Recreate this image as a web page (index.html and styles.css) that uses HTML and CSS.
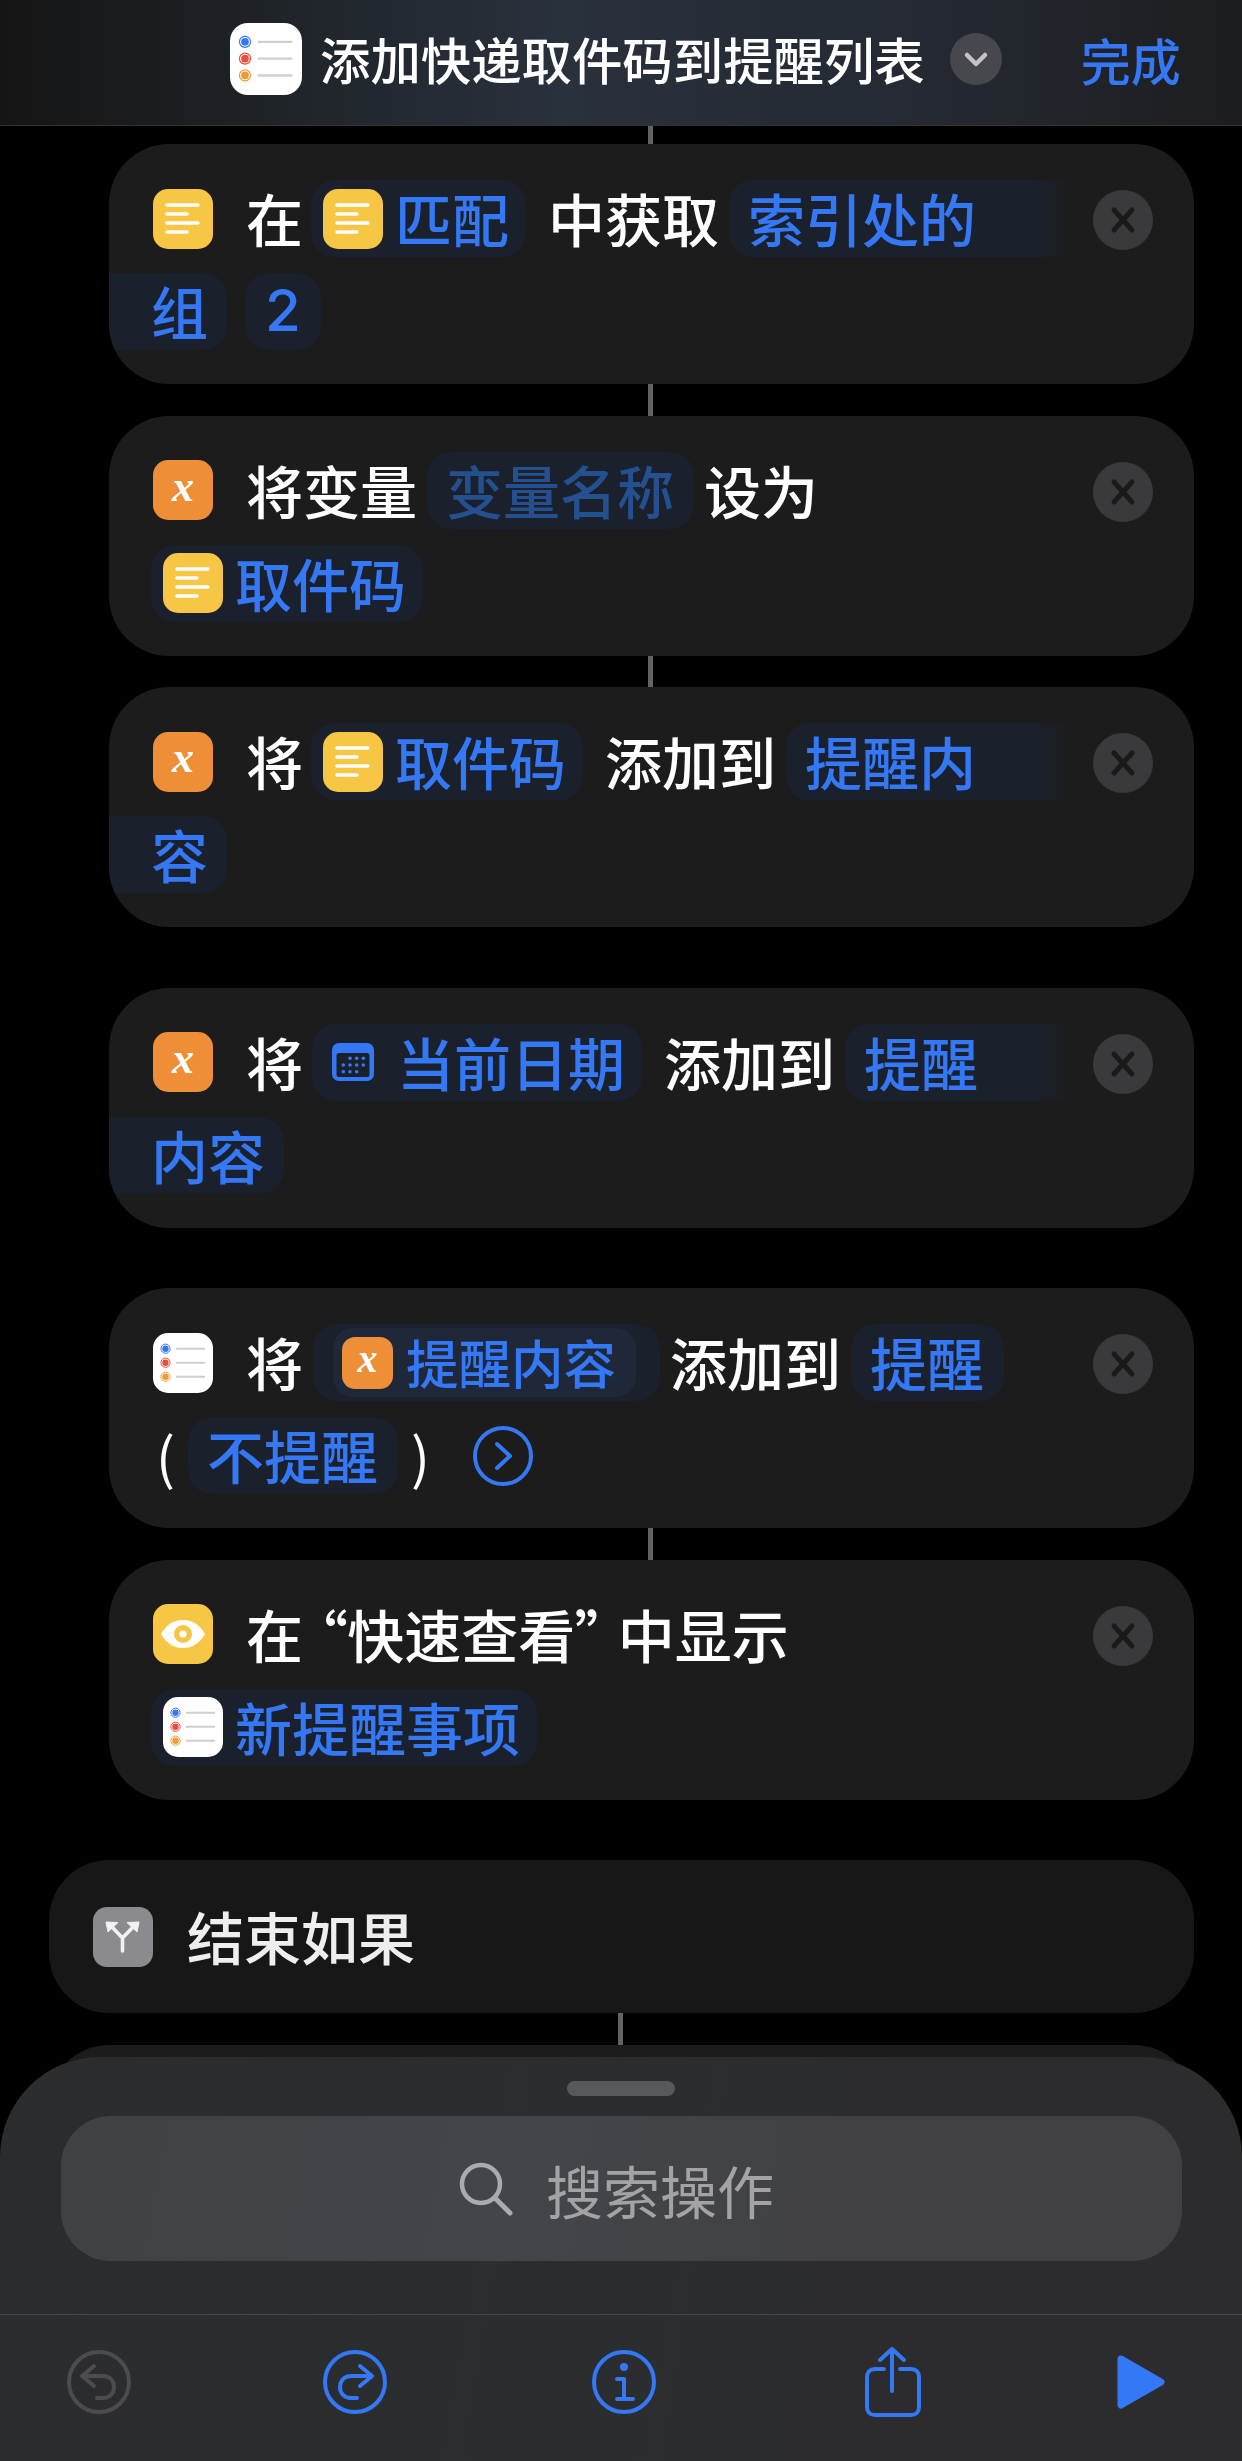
FILE: index.html
```html
<!DOCTYPE html>
<html lang="zh-CN">
<head>
    <meta charset="UTF-8">
    <title>添加快递取件码到提醒列表</title>
    <link rel="stylesheet" href="styles.css">
</head>
<body>
    <svg class="defs">
        <symbol id="doc" viewBox="0 0 60 60">
            <rect width="60" height="60" rx="15" fill="#f6c644"/>
            <path d="M14 16H45M14 25H34M14 34H45M14 43H34" stroke="#fff" stroke-width="3.4" stroke-linecap="round"/>
        </symbol>
        <symbol id="reminders" viewBox="0 0 60 60">
            <rect width="60" height="60" rx="15" fill="#fff"/>
            <g fill="none" stroke-width="1">
                <circle cx="12.5" cy="15.7" r="4.6" stroke="#3478f6"/>
                <circle cx="12.5" cy="29.7" r="4.6" stroke="#eb4d3d"/>
                <circle cx="12.5" cy="43.7" r="4.6" stroke="#f09a37"/>
            </g>
            <circle cx="12.5" cy="15.7" r="3.2" fill="#3478f6"/>
            <circle cx="12.5" cy="29.7" r="3.2" fill="#eb4d3d"/>
            <circle cx="12.5" cy="43.7" r="3.2" fill="#f09a37"/>
            <path d="M23 15.7H52M23 29.7H52M23 43.7H52" stroke="#cfcfcf" stroke-width="2"/>
        </symbol>
        <symbol id="close" viewBox="0 0 60 60">
            <circle cx="30" cy="30" r="30" fill="#3a3a3c"/>
            <path d="M21 20L39 40M39 20L21 40" stroke="#1a1a1a" stroke-width="5" stroke-linecap="round"/>
        </symbol>
        <symbol id="eye" viewBox="0 0 60 60">
            <rect width="60" height="60" rx="15" fill="#f6c644"/>
            <path d="M8 30C14 20 21 16 30 16S46 20 52 30C46 40 39 44 30 44S14 40 8 30Z" fill="#fff"/>
            <circle cx="30" cy="30" r="9" fill="#f6c644"/>
            <circle cx="30" cy="30" r="3.6" fill="#fff"/>
        </symbol>
        <symbol id="calendar" viewBox="0 0 42 38">
            <rect width="42" height="38" rx="7" fill="#3478f6"/>
            <rect x="4.5" y="10" width="33" height="24" rx="2.5" fill="#1a212c"/>
            <g fill="#3478f6">
                <circle cx="18" cy="15.3" r="1.8"/><circle cx="24.7" cy="15.3" r="1.8"/><circle cx="31.3" cy="15.3" r="1.8"/>
                <circle cx="11.3" cy="22" r="1.8"/><circle cx="18" cy="22" r="1.8"/><circle cx="24.7" cy="22" r="1.8"/><circle cx="31.3" cy="22" r="1.8"/>
                <circle cx="11.3" cy="28.7" r="1.8"/><circle cx="18" cy="28.7" r="1.8"/><circle cx="24.7" cy="28.7" r="1.8"/>
            </g>
        </symbol>
    </svg>

    <div class="page">
        <header class="topbar">
            <svg class="app-icon"><use href="#reminders"/></svg>
            <div class="title">添加快递取件码到提醒列表</div>
            <svg class="title-menu" viewBox="0 0 52 52">
                <circle cx="26" cy="26" r="26" fill="#47484d"/>
                <path d="M17 22L26 31L35 22" fill="none" stroke="#c4c4c8" stroke-width="4.5" stroke-linecap="round" stroke-linejoin="round"/>
            </svg>
            <div class="done">完成</div>
        </header>

        <div class="flow">
            <div class="link link-top"></div>
            <section class="card">
                <div class="row">
                    <svg class="icon"><use href="#doc"/></svg>
                    <span class="word first">在</span>
                    <span class="token with-icon"><svg class="icon"><use href="#doc"/></svg>匹配</span>
                    <span class="word wide">中获取</span>
                    <span class="token cut">索引处的</span>
                </div>
                <div class="row">
                    <span class="token rest">组</span>
                    <span class="token num">2</span>
                </div>
                <svg class="close"><use href="#close"/></svg>
            </section>
            <div class="link"></div>
            <section class="card">
                <div class="row">
                    <span class="badge-x">x</span>
                    <span class="word first">将变量</span>
                    <span class="token dim">变量名称</span>
                    <span class="word">设为</span>
                </div>
                <div class="row">
                    <span class="token with-icon">
                        <svg class="icon"><use href="#doc"/></svg>取件码
                    </span>
                </div>
                <svg class="close"><use href="#close"/></svg>
            </section>
            <div class="link"></div>
            <section class="card">
                <div class="row">
                    <span class="badge-x">x</span>
                    <span class="word first">将</span>
                    <span class="token with-icon"><svg class="icon"><use href="#doc"/></svg>取件码</span>
                    <span class="word wide">添加到</span>
                    <span class="token cut">提醒内</span>
                </div>
                <div class="row">
                    <span class="token rest">容</span>
                </div>
                <svg class="close"><use href="#close"/></svg>
            </section>
            <div class="spacer"></div>
            <section class="card">
                <div class="row">
                    <span class="badge-x">x</span>
                    <span class="word first">将</span>
                    <span class="token with-cal"><svg class="cal"><use href="#calendar"/></svg>当前日期</span>
                    <span class="word wide">添加到</span>
                    <span class="token cut">提醒</span>
                </div>
                <div class="row">
                    <span class="token rest">内容</span>
                </div>
                <svg class="close"><use href="#close"/></svg>
            </section>
            <div class="spacer"></div>
            <section class="card">
                <div class="row">
                    <svg class="icon"><use href="#reminders"/></svg>
                    <span class="word first">将</span>
                    <span class="token outer">
                        <span class="inner"><span class="badge-x small">x</span>提醒内容</span>
                    </span>
                    <span class="word">添加到</span>
                    <span class="token">提醒</span>
                </div>
                <div class="row">
                    <span class="paren">(</span>
                    <span class="token">不提醒</span>
                    <span class="paren">)</span>
                    <svg class="more" viewBox="0 0 60 60">
                        <circle cx="30" cy="30" r="28" fill="none" stroke="#3478f6" stroke-width="4"/>
                        <path d="M24 18L37 30L24 42" fill="none" stroke="#3478f6" stroke-width="4" stroke-linecap="round" stroke-linejoin="round"/>
                    </svg>
                </div>
                <svg class="close"><use href="#close"/></svg>
            </section>
            <div class="link"></div>
            <section class="card">
                <div class="row">
                    <svg class="icon"><use href="#eye"/></svg>
                    <span class="word first">在 <span class="quote open">“</span>快速查看<span class="quote shut">”</span> 中显示</span>
                </div>
                <div class="row">
                    <span class="token with-icon"><svg class="icon"><use href="#reminders"/></svg>新提醒事项</span>
                </div>
                <svg class="close"><use href="#close"/></svg>
            </section>
            <div class="spacer"></div>
            <section class="card end">
                <svg class="icon" viewBox="0 0 60 60">
                    <rect width="60" height="60" rx="14" fill="#8b8b8f"/>
                    <path d="M29.5 44V31L18 19M29.5 31L41 19" fill="none" stroke="#f2f2f2" stroke-width="3.6" stroke-linecap="round" stroke-linejoin="round"/>
                    <path d="M13 15L25 15.5L15 25ZM46 15L34 15.5L44 25Z" fill="#f2f2f2" stroke="#f2f2f2" stroke-linejoin="round"/>
                </svg>
                <span class="word first">结束如果</span>
            </section>
            <div class="link link-outer"></div>
            <section class="card next"></section>
        </div>

        <div class="sheet">
            <div class="grabber"></div>
            <div class="search">
                <svg class="search-icon" viewBox="0 0 54 54">
                    <circle cx="22" cy="22" r="19" fill="none" stroke="#ababae" stroke-width="4.5"/>
                    <path d="M36 36L51 51" stroke="#ababae" stroke-width="5" stroke-linecap="round"/>
                </svg>
                <span>搜索操作</span>
            </div>
            <div class="tools">
                <svg class="tool" viewBox="0 0 64 64">
                    <circle cx="32" cy="32" r="30" fill="none" stroke="#4c4c4e" stroke-width="4"/>
                    <path d="M27 16L15 26L27 36M15 26H36C43 26 47 31 47 37C47 43 43 48 36 48H30" fill="none" stroke="#4c4c4e" stroke-width="4" stroke-linecap="round" stroke-linejoin="round"/>
                </svg>
                <svg class="tool" viewBox="0 0 64 64">
                    <circle cx="32" cy="32" r="30" fill="none" stroke="#3478f6" stroke-width="4"/>
                    <path d="M37 16L49 26L37 36M49 26H28C21 26 17 31 17 37C17 43 21 48 28 48H34" fill="none" stroke="#3478f6" stroke-width="4" stroke-linecap="round" stroke-linejoin="round"/>
                </svg>
                <svg class="tool" viewBox="0 0 64 64">
                    <circle cx="32" cy="32" r="30" fill="none" stroke="#3478f6" stroke-width="4"/>
                    <circle cx="32" cy="17" r="4" fill="#3478f6"/>
                    <path d="M25 29H32V49M25 49H41" fill="none" stroke="#3478f6" stroke-width="4" stroke-linecap="round" stroke-linejoin="round"/>
                </svg>
                <svg class="tool share" viewBox="0 0 56 70">
                    <path d="M19 22H10C5 22 2 25 2 30V60C2 65 5 68 10 68H46C51 68 54 65 54 60V30C54 25 51 22 46 22H35" fill="none" stroke="#3478f6" stroke-width="4" stroke-linecap="round"/>
                    <path d="M27 44V3M15 13L27 2L39 13" fill="none" stroke="#3478f6" stroke-width="4" stroke-linecap="round" stroke-linejoin="round"/>
                </svg>
                <svg class="tool play" viewBox="0 0 48 54">
                    <path d="M4 4L44 27L4 50Z" fill="#3478f6" stroke="#3478f6" stroke-width="7" stroke-linejoin="round"/>
                </svg>
            </div>
        </div>
    </div>
</body>
</html>
```

FILE: styles.css
```css
* {
    box-sizing: border-box;
}
body {
    margin: 0;
    background: #000;
    font-family: "Noto Sans CJK SC", "Noto Sans", sans-serif;
}
.defs {
    display: none;
}
.page {
    position: relative;
    width: 1242px;
    height: 2461px;
    overflow: hidden;
    background: #000;
}

/* top bar */
.topbar {
    display: flex;
    align-items: center;
    height: 126px;
    padding: 0 0 8px 230px;
    border-bottom: 1px solid #333;
    background: linear-gradient(90deg, #151515 0, #20252b 25%, #29313c 45%, #242932 75%, #1c1d1f 100%);
}
.app-icon {
    width: 72px;
    height: 72px;
}
.title {
    margin-left: 18px;
    color: #fff;
    font-size: 50.4px;
    font-weight: 500;
    white-space: nowrap;
}
.title-menu {
    width: 52px;
    height: 52px;
    margin-left: 25px;
}
.done {
    margin-left: 79px;
    color: #3478f6;
    font-size: 50px;
    font-weight: 500;
}

/* action list */
.flow {
    display: flex;
    flex-direction: column;
    padding-left: 109px;
}
.link {
    flex: none;
    width: 5px;
    height: 31.5px;
    margin-left: 539px;
    background: #636366;
}
.link-top {
    height: 18px;
}
.link-outer {
    margin-left: 509px;
}
.spacer {
    flex: none;
    height: 60.5px;
}
.card {
    position: relative;
    display: flex;
    flex: none;
    flex-direction: column;
    gap: 16px;
    width: 1085px;
    height: 240px;
    padding: 36px 44px 0;
    overflow: hidden;
    border-radius: 60px;
    background: #1c1c1c;
}
.card.end {
    flex-direction: row;
    align-items: center;
    width: 1145px;
    height: 153px;
    margin-left: -60px;
    padding: 0 44px;
    gap: 0;
    background: #171718;
}
.card.next {
    width: 1145px;
    margin-left: -60px;
}
.row {
    display: flex;
    align-items: center;
    gap: 10px;
    height: 77px;
    white-space: nowrap;
}
.icon {
    flex: none;
    width: 60px;
    height: 60px;
}
.word {
    padding-bottom: 3px;
    color: #fff;
    font-size: 57px;
    font-weight: 500;
    line-height: 74px;
}
.word.first {
    margin-left: 23px;
}
.word.wide {
    margin-left: 12px;
}
.quote {
    font-feature-settings: "palt";
}
.quote.open {
    margin-left: 3px;
}
.quote.shut {
    margin-right: 1px;
}
.card.end .word.first {
    margin-left: 34px;
    color: #eee;
}
.close {
    position: absolute;
    top: 46px;
    right: 41px;
    width: 60px;
    height: 60px;
}

/* variable tokens */
.token {
    display: inline-flex;
    flex: none;
    align-items: center;
    height: 77px;
    padding: 0 20px 3px 19px;
    border-radius: 24px;
    background: #1a212c;
    color: #3478f6;
    font-size: 57px;
    font-weight: 500;
}
.token .icon,
.token .cal {
    margin-top: 3px;
}
.token.with-icon {
    gap: 12px;
    padding-left: 12px;
    padding-right: 17px;
}
.row > .token.with-icon:first-child {
    margin-left: -2px;
}
.word.first + .token.with-icon {
    margin-left: -2px;
}
.token.with-cal {
    gap: 23px;
    margin-left: -1px;
    padding-left: 20px;
    padding-right: 17px;
}
.cal {
    width: 42px;
    height: 38px;
}
.token.dim {
    color: #25508f;
}
.token.cut {
    flex: 1;
    margin-right: 79px;
    border-radius: 24px 0 0 24px;
    background: linear-gradient(270deg, #1c1c1c 0, #1a212c 35px);
}
.token.rest {
    margin-left: -44px;
    padding-left: 42px;
    padding-right: 19px;
    border-radius: 0 24px 24px 0;
}
.token.num {
    margin-left: 8px;
    padding: 0 20px 3px;
    font-family: "Inter", sans-serif;
    font-size: 58px;
}
.token.outer {
    padding: 0 24px 0 20px;
}
.inner {
    display: flex;
    align-items: center;
    gap: 13px;
    height: 69px;
    padding: 0 20px 3px 9px;
    border-radius: 20px;
    background: #1e2838;
    font-size: 52.5px;
}
.badge-x {
    display: flex;
    flex: none;
    align-items: center;
    justify-content: center;
    width: 60px;
    height: 60px;
    padding-bottom: 8px;
    border-radius: 15px;
    background: #ee8e37;
    color: #fff;
    font-family: "Liberation Serif", serif;
    font-size: 44px;
    font-style: italic;
    font-weight: 700;
}
.badge-x.small {
    width: 51px;
    height: 52px;
    margin-top: 3px;
    border-radius: 13px;
    font-size: 40px;
}
.paren {
    width: 25px;
    padding-bottom: 3px;
    color: #fff;
    font-size: 56px;
    font-weight: 400;
    text-align: center;
}
.more {
    width: 60px;
    height: 60px;
    margin-left: 30px;
}

/* bottom sheet */
.sheet {
    position: absolute;
    left: 0;
    right: 0;
    bottom: 0;
    height: 404px;
    border-radius: 100px 100px 0 0;
    background: linear-gradient(100deg, #2b2c2e 0, #2a2e31 40%, #2c2c2e 70%);
}
.grabber {
    width: 108px;
    height: 15px;
    margin: 24px auto 0;
    border-radius: 8px;
    background: #58595b;
}
.search {
    display: flex;
    align-items: center;
    justify-content: center;
    gap: 33px;
    width: 1121px;
    height: 145px;
    margin: 20px 0 0 61px;
    padding-right: 10px;
    border-radius: 50px;
    background: linear-gradient(100deg, #404144 0, #42464a 40%, #414144 70%);
    color: #a3a3a6;
    font-size: 57px;
}
.search-icon {
    width: 54px;
    height: 54px;
}
.tools {
    display: grid;
    grid-template-columns: 256px 269px 273px 252px auto;
    align-items: center;
    justify-items: start;
    height: 147px;
    margin-top: 53px;
    padding: 0 0 13px 67px;
    border-top: 1px solid #48484a;
}
.tool {
    width: 64px;
    height: 64px;
}
.tool.share {
    width: 56px;
    height: 70px;
}
.tool.play {
    width: 48px;
    height: 54px;
}
```
